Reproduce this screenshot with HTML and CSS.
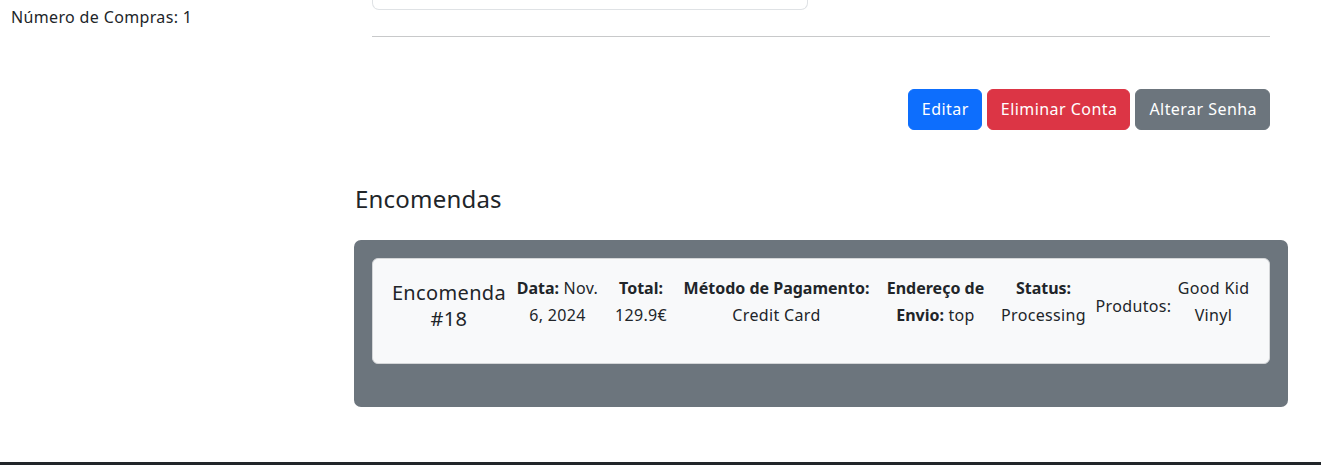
FILE: index.html
```html
<!DOCTYPE html>
<html lang="pt">
<head>
<meta charset="utf-8">
<title>Perfil</title>
<link rel="stylesheet" href="styles.css">
</head>
<body>
<div class="page">
  <aside class="aside">
    <p class="stat">Número de Compras: 1</p>
  </aside>
  <main class="main">
    <div class="upper">
      <div class="info-card"></div>
      <hr class="divider">
      <div class="actions">
        <button class="btn btn-primary" type="button">Editar</button>
        <button class="btn btn-danger" type="button">Eliminar Conta</button>
        <button class="btn btn-secondary" type="button">Alterar Senha</button>
      </div>
    </div>
    <h4 class="section-title">Encomendas</h4>
    <div class="orders">
      <div class="order-card">
        <h5 class="order-id">Encomenda #18</h5>
        <p class="field"><b>Data:</b> Nov. 6, 2024</p>
        <p class="field"><b>Total:</b> 129.9€</p>
        <p class="field"><b>Método de Pagamento:</b> Credit Card</p>
        <p class="field"><b>Endereço de Envio:</b> top</p>
        <p class="field"><b>Status:</b> Processing</p>
        <p class="label">Produtos:</p>
        <p class="field">Good Kid Vinyl</p>
      </div>
    </div>
  </main>
</div>
<footer class="footer"></footer>
</body>
</html>
```
FILE: styles.css
```css
* { box-sizing: border-box; }

body {
  margin: 0;
  font-family: "Noto Sans", "Open Sans", sans-serif;
  font-size: 16px;
  line-height: 1.7;
  letter-spacing: 0.35px;
  color: #212529;
  background: #fff;
}

.page {
  display: flex;
  height: 462px;
}

.aside {
  width: 354px;
  flex: none;
  padding: 4px 0 0 11px;
}

.stat {
  margin: 0;
  line-height: 27px;
}

.main {
  width: 934px;
  flex: none;
}

.upper {
  padding: 0 18px;
}

.info-card {
  width: 436px;
  height: 10px;
  border: 1px solid #dfe2e5;
  border-top: none;
  border-radius: 0 0 7px 7px;
}

.divider {
  margin: 26px 0 0;
  border: 0;
  border-top: 1px solid #c8c9ca;
}

.actions {
  display: flex;
  justify-content: flex-end;
  gap: 5px;
  margin-top: 52px;
}

.btn {
  font-family: inherit;
  font-size: 16px;
  letter-spacing: 0.45px;
  line-height: 27px;
  padding: 6px 12px 6px 13px;
  border: 1px solid transparent;
  border-radius: 6px;
  color: #fff;
  cursor: pointer;
}

.btn-primary { background: #0d6efd; border-color: #0d6efd; }
.btn-danger { background: #dc3545; border-color: #dc3545; }
.btn-secondary { background: #6c757d; border-color: #6c757d; }

.section-title {
  margin: 54px 0 27px 1px;
  font-size: 24px;
  font-weight: 400;
  letter-spacing: 0.2px;
  line-height: 29px;
}

.orders {
  background: #6c757d;
  border-radius: 7px;
  padding: 18px 18px 43px;
}

.order-card {
  display: grid;
  grid-template-columns: 120px 97px 70px 201px 117px 99px 81px 79px;
  align-items: center;
  text-align: center;
  background: #f8f9fa;
  border: 1px solid #d4d6d8;
  border-radius: 6px;
  padding: 16px 16px 18px;
}

.order-id {
  margin: 0 0 8px;
  font-size: 20px;
  font-weight: 400;
  line-height: 26px;
}

.field {
  margin: 0 0 16px;
}

.field b {
  font-weight: 700;
  letter-spacing: 0;
}

.label {
  margin: 0 0 8px;
}

.footer {
  height: 3px;
  background: #212529;
}
```
